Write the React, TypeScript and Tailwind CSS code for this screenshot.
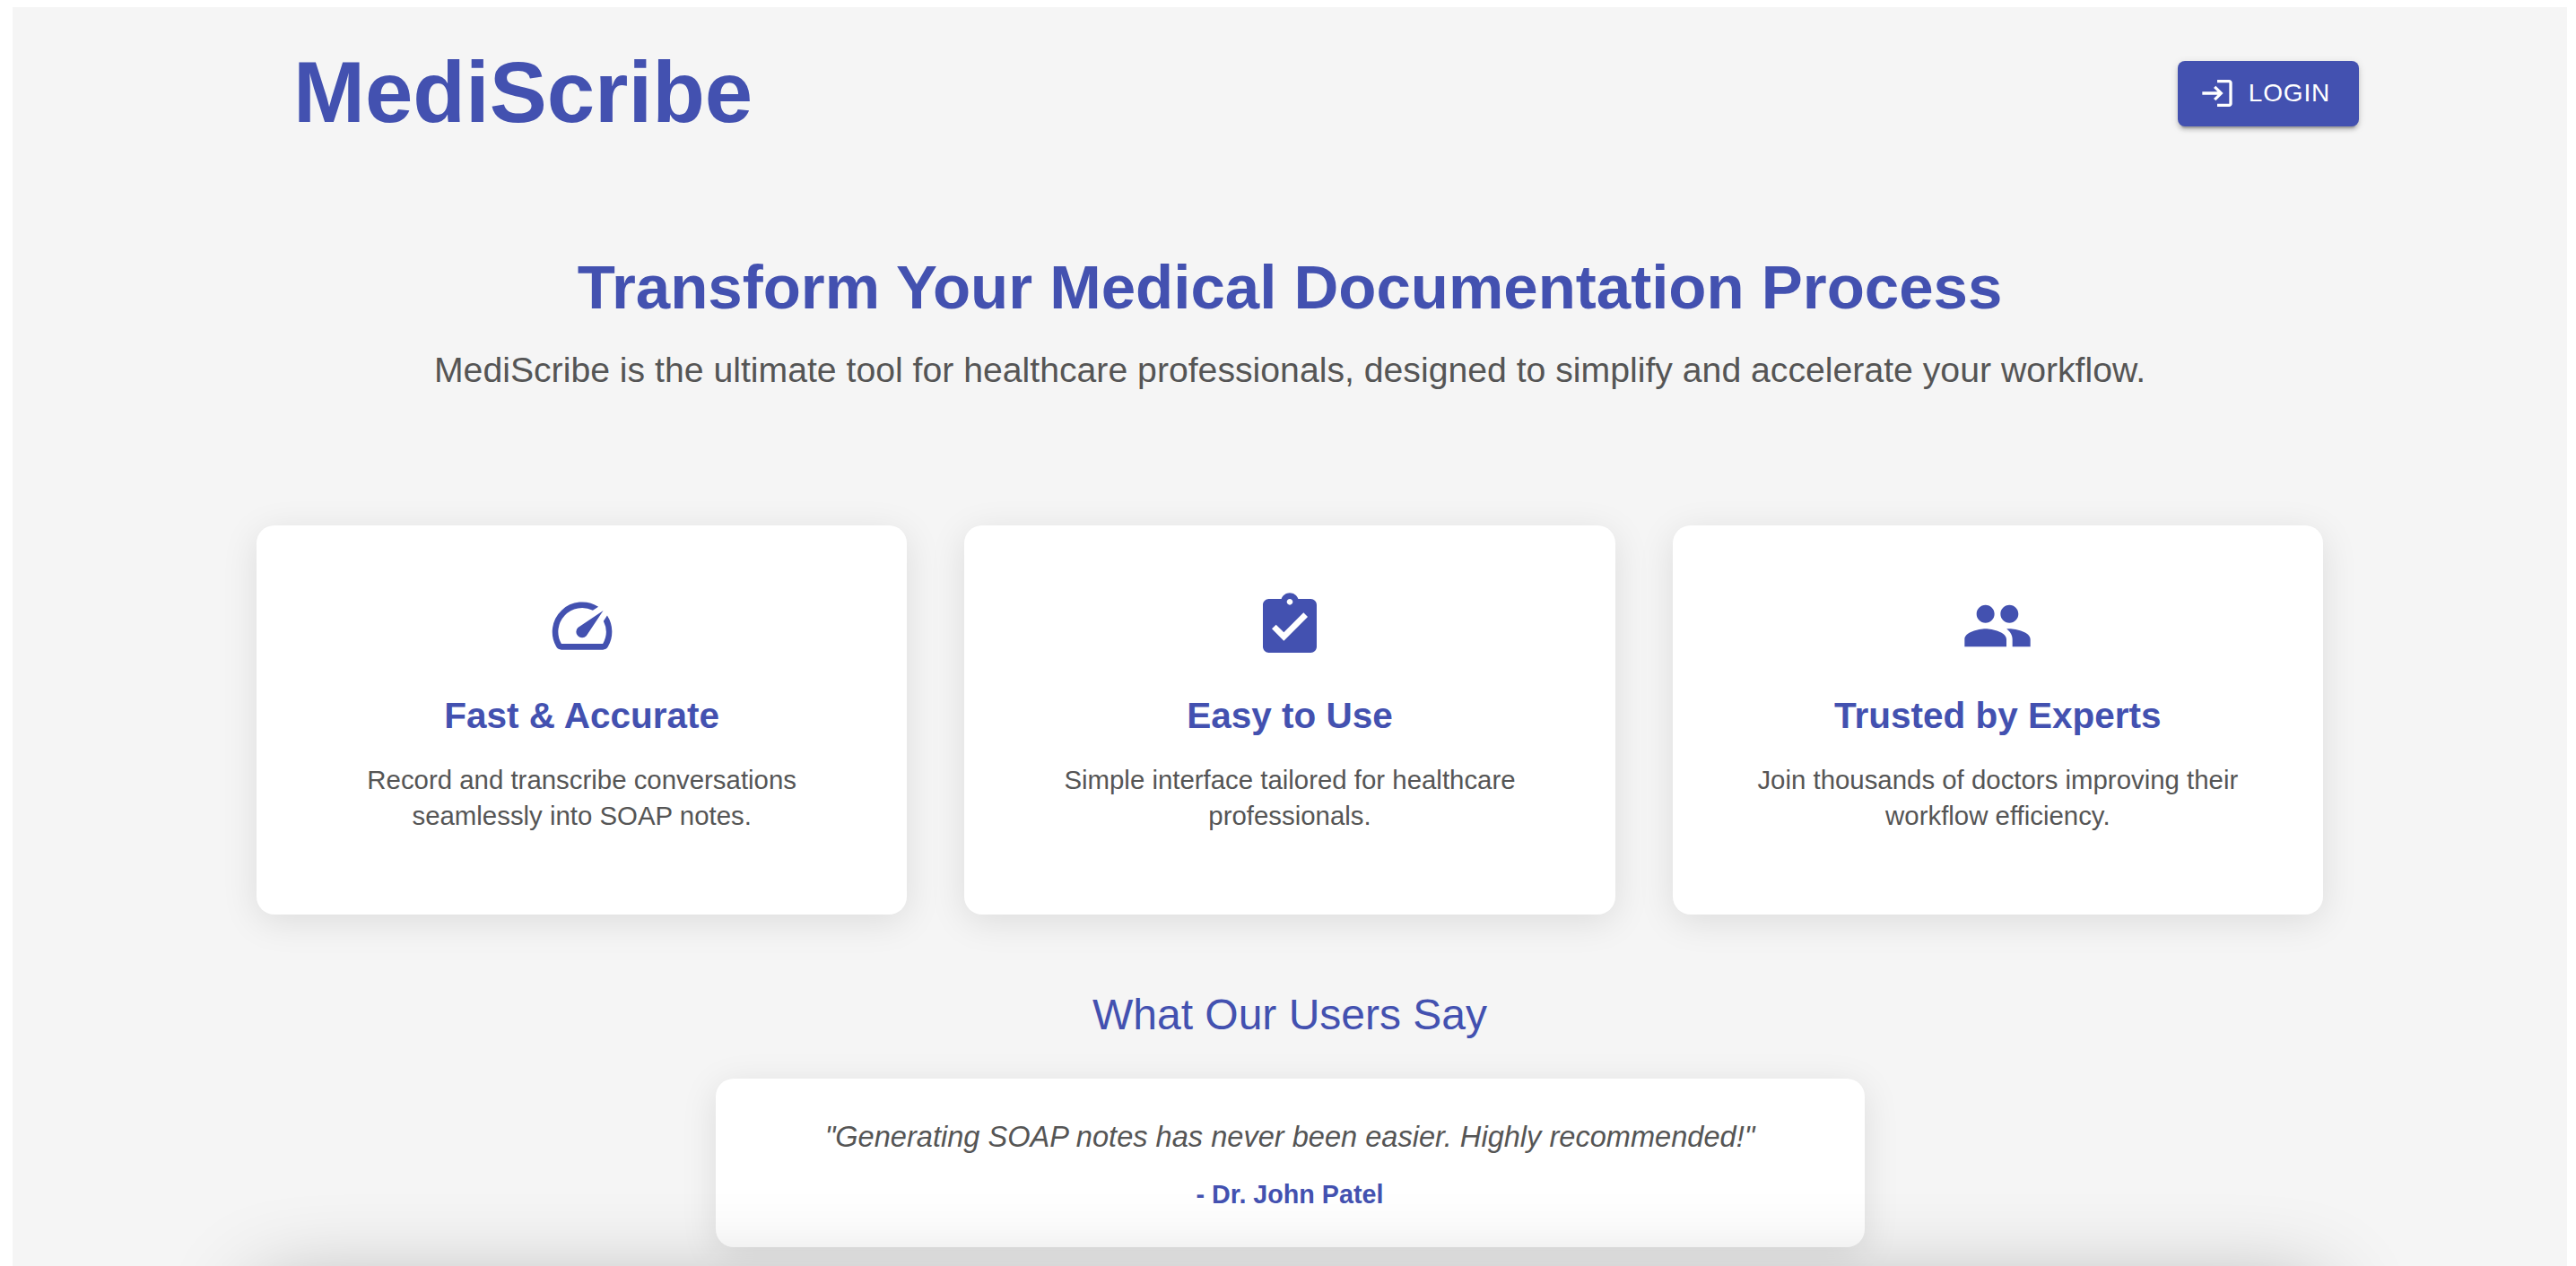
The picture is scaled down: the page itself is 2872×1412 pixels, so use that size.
import React from 'react';
import { MdLogin, MdSpeed, MdAssignmentTurnedIn, MdPeople } from 'react-icons/md';

const features = [
  {
    icon: <MdSpeed className="w-20 h-20 text-[#4351b0]" />,
    title: 'Fast & Accurate',
    lines: ['Record and transcribe conversations', 'seamlessly into SOAP notes.'],
  },
  {
    icon: <MdAssignmentTurnedIn className="w-20 h-20 text-[#4351b0]" />,
    title: 'Easy to Use',
    lines: ['Simple interface tailored for healthcare', 'professionals.'],
  },
  {
    icon: <MdPeople className="w-20 h-20 text-[#4351b0]" />,
    title: 'Trusted by Experts',
    lines: ['Join thousands of doctors improving their', 'workflow efficiency.'],
  },
];

const App: React.FC = () => {
  return (
    <div className="h-[1412px] overflow-hidden bg-white pt-2 pl-[14px] pr-[10px] font-['Liberation_Sans',Arial,sans-serif]">
      <div className="h-full overflow-hidden bg-[#f5f5f5]">
        <header className="flex items-center justify-between pl-[313px] pr-[232px] pt-[39px]">
          <h1 className="text-[96px] leading-[112px] mb-[2px] font-bold text-[#4351b0]">MediScribe</h1>
          <button className="flex items-center gap-[15px] h-[73px] px-8 rounded-lg bg-[#4351b0] text-white text-[28px] tracking-[0.8px] shadow-[0_6px_2px_-4px_rgba(0,0,0,0.2),0_4px_4px_0_rgba(0,0,0,0.14),0_2px_10px_0_rgba(0,0,0,0.12)]">
            <MdLogin className="w-10 h-10 -ml-2" />
            LOGIN
          </button>
        </header>

        <section className="mt-[120px] text-center">
          <h2 className="text-[69px] leading-[80px] font-bold text-[#4351b0]">Transform Your Medical Documentation Process</h2>
          <p className="mt-[24px] text-[39.2px] leading-[56px] text-[#555]">
            MediScribe is the ultimate tool for healthcare professionals, designed to simplify and accelerate your workflow.
          </p>
        </section>

        <div className="mt-[145px] mx-auto w-[2304px] grid grid-cols-3 gap-16">
          {features.map((f) => (
            <div key={f.title} className="h-[434px] rounded-[20px] bg-white flex flex-col items-center pt-[72px] shadow-[0_8px_40px_rgba(0,0,0,0.1)]">
              {f.icon}
              <h3 className="mt-[32px] text-[40.5px] leading-[56px] font-bold text-[#4351b0]">{f.title}</h3>
              <p className="mt-[24px] text-[29.4px] leading-[40px] text-[#555] text-center">
                {f.lines[0]}
                <br />
                {f.lines[1]}
              </p>
            </div>
          ))}
        </div>

        <h4 className="mt-[78px] text-center text-[48px] leading-[68px] text-[#4351b0]">What Our Users Say</h4>
        <div className="mt-[37px] mx-auto w-[1281px] h-[188px] rounded-[20px] bg-white text-center pt-[43px] shadow-[0_8px_40px_rgba(0,0,0,0.1)]">
          <p className="text-[32.6px] leading-[44px] italic text-[#555]">"Generating SOAP notes has never been easier. Highly recommended!"</p>
          <p className="mt-[22px] text-[28.7px] leading-[40px] font-bold text-[#4351b0]">- Dr. John Patel</p>
        </div>

        <div className="mt-[46px] mx-auto w-[2304px] h-[300px] rounded-[20px] bg-white shadow-[0_0_100px_rgba(0,0,0,0.3)]"></div>
      </div>
    </div>
  );
};

export default App;
